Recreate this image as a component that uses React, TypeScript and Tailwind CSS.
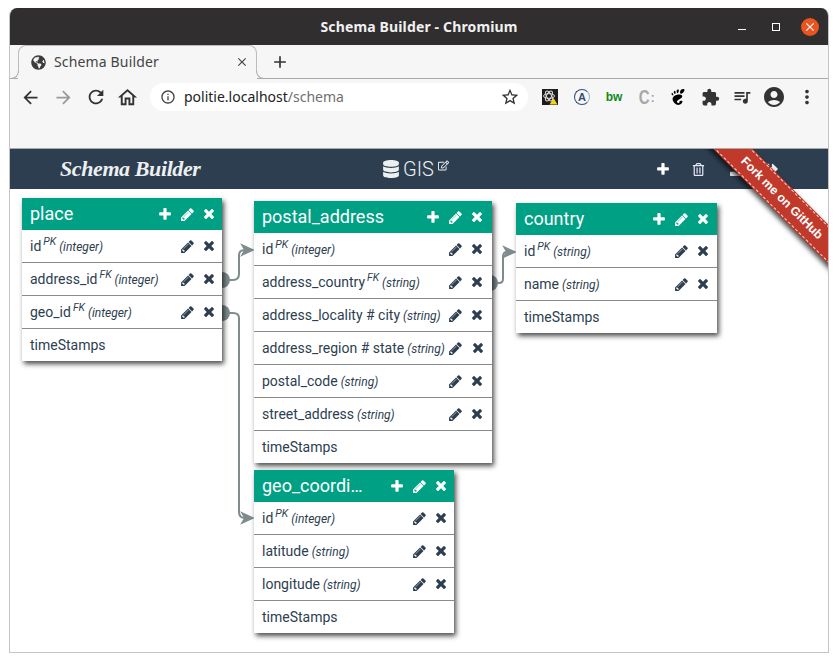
import React from "react";
import { FaDatabase, FaRegTrashAlt, FaRegEdit, FaGlobeAmericas, FaDownload, FaSignOutAlt } from "react-icons/fa";
import { MdArrowBack, MdArrowForward, MdRefresh, MdOutlineHome, MdInfoOutline, MdStarBorder, MdQueueMusic, MdAccountCircle, MdMoreVert, MdClose, MdAdd, MdExtension } from "react-icons/md";
import { SiGnome } from "react-icons/si";

type Field = { name: string; key?: string; type?: string };
type NodeT = { title: string; cls: string; pr: string; fields: Field[] };

const nodes: NodeT[] = [
  {
    title: "place",
    cls: "left-[12px] top-[49px] w-[200px]",
    pr: "pr-[2px]",
    fields: [
      { name: "id", key: "PK", type: "integer" },
      { name: "address_id", key: "FK", type: "integer" },
      { name: "geo_id", key: "FK", type: "integer" },
      { name: "timeStamps" },
    ],
  },
  {
    title: "postal_address",
    cls: "left-[244px] top-[52px] w-[238px]",
    pr: "pr-[4px]",
    fields: [
      { name: "id", key: "PK", type: "integer" },
      { name: "address_country", key: "FK", type: "string" },
      { name: "address_locality # city", type: "string" },
      { name: "address_region # state", type: "string" },
      { name: "postal_code", type: "string" },
      { name: "street_address", type: "string" },
      { name: "timeStamps" },
    ],
  },
  {
    title: "country",
    cls: "left-[506px] top-[54px] w-[201px]",
    pr: "pr-[3px]",
    fields: [
      { name: "id", key: "PK", type: "string" },
      { name: "name", type: "string" },
      { name: "timeStamps" },
    ],
  },
  {
    title: "geo_coordi…",
    cls: "left-[244px] top-[321px] w-[200px]",
    pr: "pr-[2px]",
    fields: [
      { name: "id", key: "PK", type: "integer" },
      { name: "latitude", type: "string" },
      { name: "longitude", type: "string" },
      { name: "timeStamps" },
    ],
  },
];

function PlusIcon({ className = "" }: { className?: string }) {
  return (
    <svg className={className} viewBox="0 0 1408 1792" width="12" height="15" fill="currentColor">
      <path d="M1408 736v192q0 40-28 68t-68 28h-416v416q0 40-28 68t-68 28h-192q-40 0-68-28t-28-68v-416h-416q-40 0-68-28t-28-68v-192q0-40 28-68t68-28h416v-416q0-40 28-68t68-28h192q40 0 68 28t28 68v416h416q40 0 68 28t28 68z" />
    </svg>
  );
}

function PencilIcon() {
  return (
    <svg viewBox="0 0 1536 1792" width="13" height="15" fill="currentColor">
      <path d="M363 1536l91-91-235-235-91 91v107h128v128h107zm523-928q0-22-22-22-10 0-17 7l-542 542q-7 7-7 17 0 22 22 22 10 0 17-7l542-542q7-7 7-17zm-54-192l416 416-832 832h-416v-416zm683 96q0 53-37 90l-166 166-416-416 166-165q36-38 90-38 53 0 91 38l235 234q37 39 37 91z" />
    </svg>
  );
}

function TimesIcon() {
  return (
    <svg viewBox="0 0 1408 1792" width="12" height="15" fill="currentColor">
      <path d="M1298 1202q0 40-28 68l-136 136q-28 28-68 28t-68-28l-294-294-294 294q-28 28-68 28t-68-28l-136-136q-28-28-28-68t28-68l294-294-294-294q-28-28-28-68t28-68l136-136q28-28 68-28t68 28l294 294 294-294q28-28 68-28t68 28l136 136q28 28 28 68t-28 68l-294 294 294 294q28 28 28 68z" />
    </svg>
  );
}

function TableNode({ node }: { node: NodeT }) {
  return (
    <div className={`absolute z-10 bg-white shadow-[2px_3px_5px_rgba(0,0,0,0.7)] ${node.cls}`}>
      <div className={`flex h-[32px] items-center justify-between bg-[#00a085] pl-[8px] text-white ${node.pr}`}>
        <span className="whitespace-nowrap text-[18px] leading-[32px]">{node.title}</span>
        <span className="flex shrink-0 items-center">
          <span className="flex w-[22px] justify-center"><PlusIcon /></span>
          <span className="flex w-[22px] justify-center"><PencilIcon /></span>
          <span className="flex w-[22px] justify-center"><TimesIcon /></span>
        </span>
      </div>
      {node.fields.map((f, i) => {
        const last = i === node.fields.length - 1;
        return (
          <div
            key={f.name}
            className={`flex items-center justify-between pl-[8px] text-[14px] text-[#2c3e50] ${node.pr} ${last ? "h-[32px]" : "h-[33px] border-b border-[#8a8a8a]"}`}
          >
            <span className="whitespace-nowrap leading-[20px]">
              {f.name}
              {f.key && <sup className="ml-[2px] text-[10.5px] italic leading-none">{f.key}</sup>}
              {f.type && <em className="ml-[3px] text-[12px]">({f.type})</em>}
            </span>
            {f.name !== "timeStamps" && (
              <span className="flex shrink-0 items-center">
                <span className="flex w-[22px] justify-center"><PencilIcon /></span>
                <span className="flex w-[22px] justify-center"><TimesIcon /></span>
              </span>
            )}
          </div>
        );
      })}
    </div>
  );
}

function Connections() {
  return (
    <svg className="absolute left-0 top-0 z-0" width="818" height="503" fill="none" stroke="#7f8c8d" strokeWidth="2">
      <g fill="#7f8c8d" stroke="none">
        <circle cx="212" cy="131" r="8" />
        <circle cx="212" cy="164" r="8" />
        <circle cx="480" cy="134" r="8" />
      </g>
      <path d="M219 131 H223 Q229 131 229 125 V106 Q229 101 235 101 H243" />
      <path d="M232 96 L243 101 L232 106 L235 101 Z" fill="#7f8c8d" strokeWidth="1.5" />
      <path d="M219 164 H223 Q229 164 229 169 V363 Q229 369 235 369 H243" />
      <path d="M232 364 L243 369 L232 374 L235 369 Z" fill="#7f8c8d" strokeWidth="1.5" />
      <path d="M487 134 H489 Q493 134 493 130 V108 Q493 103 497 103 H505" />
      <path d="M494 98 L505 103 L494 108 L497 103 Z" fill="#7f8c8d" strokeWidth="1.5" />
    </svg>
  );
}

function ToolbarExtensions() {
  return (
    <div className="flex items-center">
      <span className="flex w-[32px] justify-center">
        <svg width="16" height="16" viewBox="0 0 16 16">
          <rect width="16" height="16" fill="#1d1d1d" />
          <g fill="none" stroke="#d8d8d8" strokeWidth="1">
            <ellipse cx="7" cy="7" rx="5.5" ry="2.4" />
            <ellipse cx="7" cy="7" rx="5.5" ry="2.4" transform="rotate(60 7 7)" />
            <ellipse cx="7" cy="7" rx="5.5" ry="2.4" transform="rotate(120 7 7)" />
          </g>
          <path d="M11.5 9 L15.5 15.5 H7.5 Z" fill="#f4d21f" />
        </svg>
      </span>
      <span className="flex w-[32px] justify-center">
        <span className="flex h-[16px] w-[16px] items-center justify-center rounded-full border border-[#2f4f73] border-r-[#9fb2c6] font-['Liberation_Sans',sans-serif] text-[11px] font-bold leading-none text-[#2f4f73]">A</span>
      </span>
      <span className="flex w-[32px] justify-center font-['Liberation_Sans',sans-serif] text-[12px] font-bold leading-none tracking-[-0.2px] text-[#0e8a16]">bw</span>
      <span className="flex w-[32px] items-center justify-center font-['Liberation_Sans',sans-serif] font-bold leading-none text-[#a8a8a8]">
        <span className="inline-block scale-x-75 text-[20px]">C</span>
        <span className="ml-[-1px] text-[13px]">:</span>
      </span>
      <span className="flex w-[32px] justify-center"><SiGnome className="text-[16px] text-black" /></span>
      <span className="flex w-[32px] justify-center"><MdExtension className="text-[19px] text-[#333]" /></span>
      <span className="flex w-[32px] justify-center"><MdQueueMusic className="text-[20px] text-[#333]" /></span>
      <span className="flex w-[32px] justify-center"><MdAccountCircle className="text-[24px] text-[#333]" /></span>
      <span className="flex w-[32px] justify-center"><MdMoreVert className="ml-[2px] text-[22px] text-[#333]" /></span>
    </div>
  );
}

export default function App() {
  return (
    <div className="h-[661px] w-[838px] overflow-hidden bg-white pl-[9px] pr-[9px] pt-[8px] font-['Roboto',sans-serif]">
      <div className="flex h-[645px] w-[820px] flex-col overflow-hidden rounded-t-[8px] border border-t-0 border-[#c4c4c4]">
        {/* title bar */}
        <div className="relative flex h-[37px] shrink-0 items-center justify-center bg-[#302e2e] font-['Noto_Sans',sans-serif] text-[14px] font-bold tracking-[0.15px] text-[#f0f0f0]">
          Schema Builder - Chromium
          <div className="absolute right-[9px] top-0 flex h-full items-center">
            <span className="mr-[26px] mt-[6px] h-[1px] w-[8px] bg-white" />
            <span className="mr-[21px] h-[8px] w-[8px] border border-white" />
            <span className="flex h-[18px] w-[18px] items-center justify-center rounded-full bg-[#e95420]">
              <MdClose className="text-[14px] text-white" />
            </span>
          </div>
        </div>

        {/* tab strip */}
        <div className="flex h-[34px] shrink-0 border-b border-[#aaa] bg-[#f6f6f6] pl-[8px] font-['Noto_Sans',sans-serif]">
          <div className="relative flex h-[34px] w-[239px] items-center rounded-t-[8px] border border-b-0 border-[#bdbdbd] bg-[#f6f6f6] pb-[1px] pl-[12px] pr-[7px] text-[14px] text-[#444]">
            <span className="absolute bottom-0 left-[-1px] h-[8px] w-[1px] bg-[#f6f6f6]" />
            <span className="absolute bottom-0 right-[-1px] h-[8px] w-[1px] bg-[#f6f6f6]" />
            <span className="absolute bottom-0 left-[-9px] h-[8px] w-[9px] rounded-br-[8px] border-b border-r border-[#aaa]" />
            <span className="absolute bottom-0 right-[-9px] h-[8px] w-[9px] rounded-bl-[8px] border-b border-l border-[#aaa]" />
            <FaGlobeAmericas className="text-[15px] text-[#3c3c3c]" />
            <span className="mb-[2px] ml-[8px] flex-1 tracking-[0.15px]">Schema Builder</span>
            <MdClose className="text-[14px] text-[#444]" />
          </div>
          <span className="ml-[13px] flex items-center"><MdAdd className="text-[20px] text-[#333]" /></span>
        </div>

        {/* toolbar */}
        <div className="flex h-[70px] shrink-0 flex-col border-b border-[#aaa] bg-[#f6f6f6]">
          <div className="mt-[4px] flex h-[28px] items-center pl-[10px]">
            <MdArrowBack className="text-[21px] text-[#333]" />
            <MdArrowForward className="ml-[12px] text-[21px] text-[#999]" />
            <MdRefresh className="ml-[11px] text-[22px] text-[#333]" />
            <MdOutlineHome className="ml-[9px] text-[23px] text-[#333]" />
            <div className="ml-[11px] flex h-[28px] w-[378px] items-center rounded-full bg-white pl-[10px] pr-[8px] font-['Noto_Sans',sans-serif] text-[14px]">
              <MdInfoOutline className="text-[16px] text-[#444]" />
              <span className="mb-[2px] ml-[8px] flex-1 text-[#222]">politie.localhost<span className="text-[#6f6f6f]">/schema</span></span>
              <MdStarBorder className="text-[20px] text-[#333]" />
            </div>
            <div className="ml-[6px]"><ToolbarExtensions /></div>
          </div>
        </div>

        {/* app navbar */}
        <div className="relative flex-1">
          <div className="flex h-[40px] items-center bg-[#2c3e50] text-[#ecf0f1]">
            <span className="ml-[50px] w-[322px] font-['Liberation_Serif',serif] text-[22px] font-bold italic leading-none tracking-[-0.4px]">Schema Builder</span>
            <FaDatabase className="text-[18px]" />
            <span className="ml-[3px] text-[20px] font-light leading-none">GIS</span>
            <FaRegEdit className="mb-[8px] ml-[4px] text-[11px]" />
            <div className="ml-auto flex items-center pr-[50px]">
              <PlusIcon className="text-white" />
              <FaRegTrashAlt className="ml-[23px] text-[13px] text-[#e6e6fa]" />
              <FaDownload className="ml-[25px] text-[14px]" />
              <FaSignOutAlt className="ml-[20px] text-[14px]" />
            </div>
          </div>

          <Connections />
          {nodes.map((n) => (
            <TableNode key={n.title} node={n} />
          ))}

          {/* ribbon */}
          <div className="absolute right-0 top-0 z-20 h-[140px] w-[140px] overflow-hidden">
            <div className="absolute left-[-6px] top-[35px] w-[200px] rotate-45 bg-[#c0392b] py-[1px] text-center font-['Liberation_Sans',sans-serif] shadow-[-2px_3px_5px_rgba(0,0,0,0.7)]">
              <div className="border-y border-dashed border-[#f3d3cf] py-[4px] text-[12.25px] font-bold leading-[16px] text-white">Fork me on GitHub</div>
            </div>
          </div>
        </div>
      </div>
    </div>
  );
}
